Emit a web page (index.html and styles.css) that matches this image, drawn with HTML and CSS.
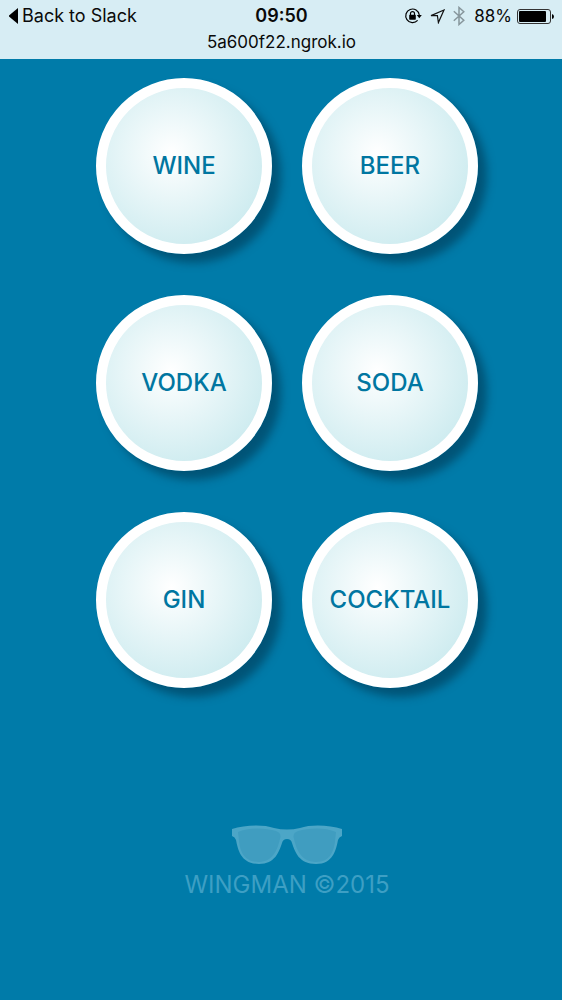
FILE: index.html
```html
<!DOCTYPE html>
<html lang="en">
<head>
<meta charset="utf-8">
<meta name="viewport" content="width=device-width, initial-scale=1">
<title>Wingman</title>
<link rel="stylesheet" href="styles.css">
</head>
<body>
<header class="chrome">
  <div class="status">
    <a class="back" href="#">
      <svg width="9" height="16" viewBox="0 0 9 16" aria-hidden="true"><path d="M9 0v16L0 8.500V7.500z"/></svg>
      <span>Back to Slack</span>
    </a>
    <time class="clock">09:50</time>
    <div class="indicators">
      <svg class="lock" width="18" height="18" viewBox="0 0 18 18" aria-hidden="true">
        <path d="M13.600 13.400A6.800 6.800 0 1 1 15.300 8" fill="none" stroke="#000" stroke-width="1.200"/>
        <path d="M12.800 8h5l-2.500 3.300z"/>
        <rect x="5.200" y="7.800" width="6.600" height="4.900" rx=".6"/>
        <path d="M6.500 8V6.600a2 2 0 0 1 4 0V8" fill="none" stroke="#000" stroke-width="1.200"/>
      </svg>
      <svg class="arrow" width="15" height="15" viewBox="0 0 15 15" aria-hidden="true">
        <path d="M14 1L1 6.600h6.400l1 7z" fill="none" stroke="#111" stroke-width="1.200"/>
      </svg>
      <svg class="bluetooth" width="12" height="20" viewBox="0 0 12 20" aria-hidden="true">
        <path d="M.8 5.300l10 9L6 18.500v-17l4.800 4.200-10 9" fill="none" stroke="#87969c" stroke-width="1.500"/>
      </svg>
      <span class="percent">88%</span>
      <svg class="battery" width="37" height="15" viewBox="0 0 37 15" aria-hidden="true">
        <rect x=".5" y=".5" width="33" height="14" rx="2.500" fill="none" stroke="#333"/>
        <rect x="2" y="2" width="27" height="11" rx="1"/>
        <path d="M35 5q2 .5 2 2.500T35 10z"/>
      </svg>
    </div>
  </div>
  <div class="address">5a600f22.ngrok.io</div>
</header>
<main class="menu">
  <button class="drink" type="button">WINE</button>
  <button class="drink" type="button">BEER</button>
  <button class="drink" type="button">VODKA</button>
  <button class="drink" type="button">SODA</button>
  <button class="drink" type="button">GIN</button>
  <button class="drink" type="button">COCKTAIL</button>
</main>
<footer class="credit">
  <svg width="110" height="39" viewBox="0 0 110 39" aria-hidden="true">
    <path class="frame" d="M0 4C12 0 31-1 42 3q13 3 26 0C79-1 98 0 110 4v7q-3 1-4 4C104 25 101 39 84 39 67 39 63 27 60 18q-1-4-5-4t-5 4C47 27 43 39 27 39 9 39 6 25 4 15Q3 12 0 11z"/>
    <path class="lens" d="M6 7C17 2 34 3 44 6q6 2 4 8C46 22 42 37 27 37 12 37 8 26 7 16zM104 7C93 2 76 3 66 6q-6 2-4 8c2 8 6 23 22 23 14 0 18-11 19-21z"/>
  </svg>
  <p class="name">WINGMAN ©2015</p>
</footer>
</body>
</html>
```
FILE: styles.css
```css
* {
  box-sizing: border-box;
}

body {
  margin: 0;
  min-height: 100vh;
  background: #007ba9;
  font-family: Inter, "Liberation Sans", sans-serif;
}

.chrome {
  height: 59px;
  background: #d7edf4;
  color: #0a0a0a;
  font-size: 18px;
  line-height: 26px;
  padding: 3px 8px 0 9px;
}

.status {
  display: grid;
  grid-template-columns: 1fr auto 1fr;
  align-items: center;
  height: 26px;
}

.back {
  display: flex;
  align-items: center;
  gap: 4px;
  color: inherit;
  text-decoration: none;
}

.clock {
  font-weight: 600;
}

.indicators {
  display: flex;
  align-items: center;
  justify-content: flex-end;
}

.arrow {
  margin: 0 8px;
}

.bluetooth {
  margin-right: 9px;
}

.percent {
  font-size: 17px;
}

.battery {
  margin-left: 5px;
}

.address {
  font-size: 17px;
  text-align: center;
}

.menu {
  display: grid;
  grid-template-columns: repeat(2, 176px);
  justify-content: center;
  gap: 41px 30px;
  padding: 19px 0 0 12px;
}

.drink {
  width: 176px;
  height: 176px;
  padding: 0;
  border: 10px solid #fff;
  border-radius: 50%;
  background: radial-gradient(circle at 42% 42%, #fff, #c2e7ec 95%);
  box-shadow: 9px 9px 9px rgba(0, 45, 70, 0.5);
  color: #0076a1;
  font: 500 24px/28px Inter, "Liberation Sans", sans-serif;
  cursor: pointer;
}

.credit {
  display: flex;
  flex-direction: column;
  align-items: center;
  padding: 137px 0 0 12px;
}

.frame {
  fill: #4ca6c7;
}

.lens {
  fill: #409dc0;
}

.name {
  margin: 6px 0 0;
  color: #3d9fc4;
  font-size: 24px;
  line-height: 30px;
}
```
